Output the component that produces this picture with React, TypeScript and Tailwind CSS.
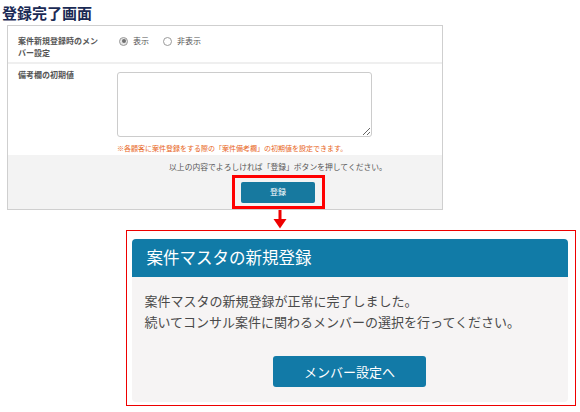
import React from 'react';

function Radio({ checked }: { checked?: boolean }) {
  return (
    <span
      className={`flex h-[9px] w-[9px] items-center justify-center rounded-full border ${
        checked ? 'border-[#9a9a9a] bg-[#e6e6e6]' : 'border-[#9a9a9a] bg-white'
      }`}
    >
      {checked && <span className="h-[4px] w-[4px] rounded-full bg-[#6f6f6f]" />}
    </span>
  );
}

function SettingsPanel() {
  return (
    <div className="ml-[7px] mt-[3px] flex h-[185px] w-[436px] flex-col border border-[#cfcfcf] bg-white">
      {/* member setting row */}
      <div className="flex h-[36px] pl-[10px] pt-[9px]">
        <div className="mr-[19px] w-[82px] text-[8px] font-bold leading-[12px] text-[#555]">
          案件新規登録時のメンバー設定
        </div>
        <div className="flex h-[12px] items-center text-[8px] text-[#555]">
          <Radio checked />
          <span className="ml-[5px]">表示</span>
          <span className="ml-[14px]">
            <Radio />
          </span>
          <span className="ml-[5px]">非表示</span>
        </div>
      </div>
      <div className="h-[2px] bg-[#efefef]" />

      {/* memo default row */}
      <div className="flex h-[91px] pl-[10px]">
        <div className="mr-[19px] w-[80px] pt-[5px] text-[8px] font-bold leading-[12px] text-[#555]">
          備考欄の初期値
        </div>
        <div className="pt-[8px]">
          <textarea
            readOnly
            className="block h-[65px] w-[255px] rounded-[3px] border border-[#cccccc] bg-white"
          />
          <div className="mt-[5px] whitespace-nowrap text-[7px] leading-[12px] text-[#e8661c]">
            ※各顧客に案件登録をする際の「案件備考欄」の初期値を設定できます。
          </div>
        </div>
      </div>

      {/* footer */}
      <div className="flex h-[54px] flex-col items-center bg-[#f3f3f3] pl-[106px] pt-[6px]">
        <div className="whitespace-nowrap text-[7.8px] leading-[12px] text-[#555]">
          以上の内容でよろしければ「登録」ボタンを押してください。
        </div>
        <div className="mt-[2px] flex h-[35px] w-[93px] items-center justify-center border-[3px] border-[#ff0000]">
          <button className="flex h-[21px] w-[74px] items-center justify-center rounded-[2px] bg-[#17799f] text-[8px] text-white">
            登録
          </button>
        </div>
      </div>
    </div>
  );
}

function ResultCard() {
  return (
    <div className="ml-[126px] mt-[1px] h-[176px] w-[450px] border-[1.5px] border-[#ee0000]">
      <div className="ml-[4.5px] mt-[7.5px] flex h-[163px] w-[436px] flex-col">
        <div className="flex h-[38px] items-center rounded-t-[4px] bg-[#117ba7] pl-[15px] text-[16.5px] text-white">
          案件マスタの新規登録
        </div>
        <div className="flex flex-1 flex-col rounded-b-[4px] bg-[#f6f4f4] pl-[13px] pt-[13px] text-[13px] leading-[21px] text-[#4a4a4a]">
          <p>案件マスタの新規登録が正常に完了しました。</p>
          <p>続いてコンサル案件に関わるメンバーの選択を行ってください。</p>
          <div className="mt-[24px] flex justify-center pr-[13px]">
            <button className="flex h-[31px] w-[153px] items-center justify-center rounded-[3px] bg-[#127aa7] text-[13px] text-white">
              メンバー設定へ
            </button>
          </div>
        </div>
      </div>
    </div>
  );
}

export default function App() {
  return (
    <div className="h-[412px] w-[580px] overflow-hidden bg-white font-['Noto_Sans_CJK_JP','Noto_Sans',sans-serif]">
      <h1 className="pl-[2px] pt-[4px] text-[15px] font-bold leading-[18px] text-[#1b2b55]">
        登録完了画面
      </h1>
      <SettingsPanel />
      <svg className="ml-[273px] block" width="14" height="19" viewBox="0 0 14 19">
        <rect x="5.5" y="0" width="3" height="10" fill="#ee0000" />
        <polygon points="0.5,9 13.5,9 7,18.5" fill="#ee0000" />
      </svg>
      <ResultCard />
    </div>
  );
}
